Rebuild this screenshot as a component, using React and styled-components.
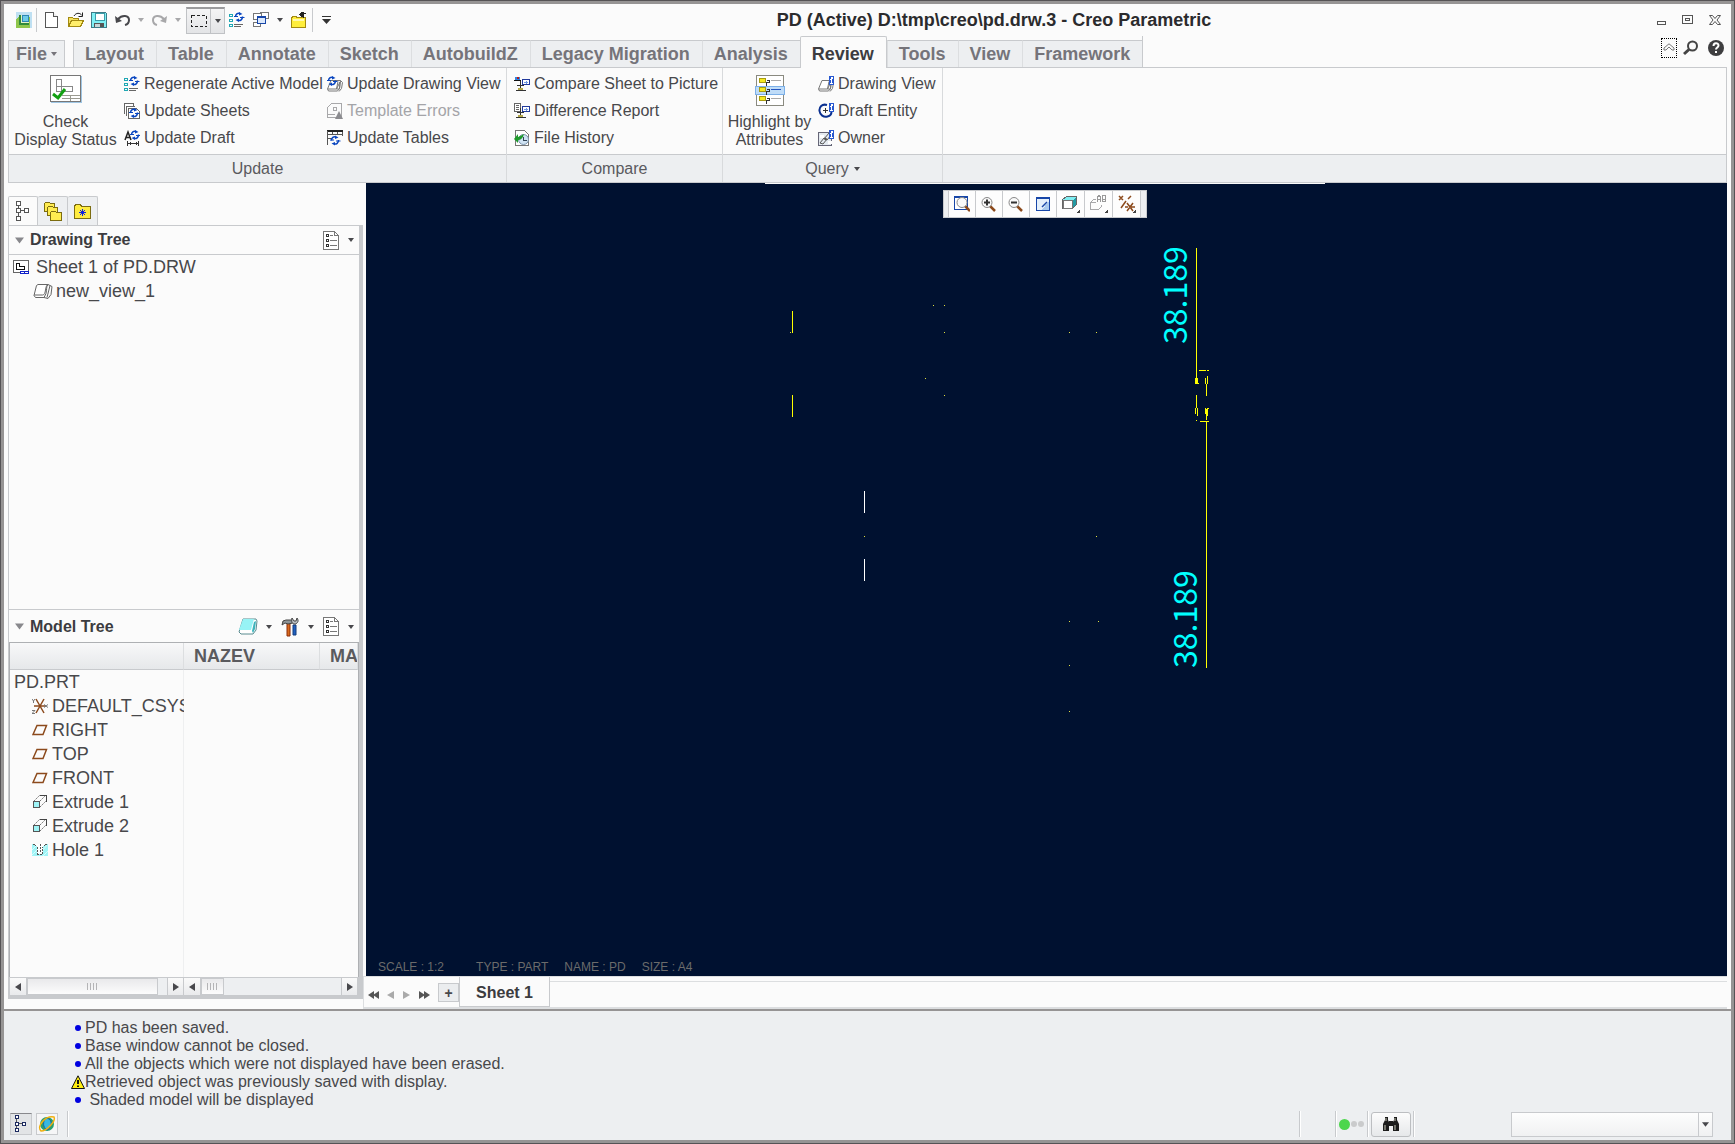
import React from 'react'
import styled, { createGlobalStyle, css } from 'styled-components'

const GlobalStyle = createGlobalStyle`
  * {
    box-sizing: border-box;
  }

  body {
    margin: 0;
    background: #fbfbfb;
    color: #48484b;
    font: 16px/18px "Liberation Sans", Arial, sans-serif;
  }

  button, input, select {
    margin: 0;
    padding: 0;
    border: 0;
    background: none;
    color: inherit;
    font: inherit;
  }

  svg {
    display: block;
    flex: none;
  }
`

const line = '#c8cacd'
const panel = '#edeff1'

/* ---------- window ---------- */

const Window = styled.div`
  display: flex;
  flex-direction: column;
  min-height: 100vh;
  border: 1px solid #555355;
  background: #969494;
  padding: 3px;
`

const Body = styled.div`
  flex: 1;
  display: flex;
  flex-direction: column;
  background: #fbfbfb;
`

const TitleBar = styled.header`
  display: flex;
  align-items: center;
  height: 32px;
  padding-left: 8px;
`

const Title = styled.h1`
  flex: 1;
  margin: 0;
  font-size: 18px;
  line-height: 24px;
  text-align: center;
  color: #2b2b2d;
`

const ToolButton = styled.button`
  display: flex;
  align-items: center;
  justify-content: center;
  width: ${props => props.$width || 24}px;
  height: 24px;
`

const ToolDivider = styled.span`
  width: 1px;
  height: 24px;
  margin-left: ${props => props.$gap || 0}px;
  background: ${line};
`

const SelectMode = styled.div`
  display: flex;
  margin-left: 1px;
  border: 1px solid #c0c2c5;
  border-top: 2px solid #9a9a9c;
  background: linear-gradient(#f4f4f5, #e3e4e6);

  button + button {
    border-left: 1px solid #c0c2c5;
  }
`

const WindowButtons = styled.div`
  display: flex;
  align-items: center;
  gap: 3px;
  padding-right: 4px;
`

/* ---------- ribbon ---------- */

const TabStrip = styled.nav`
  display: flex;
  align-items: flex-end;
  height: 31px;
  padding: 0 4px;
`

const TabList = styled.div`
  display: flex;
  align-items: flex-end;
  margin-left: 8px;
  border-right: 1px solid ${line};
`

const Tab = styled.button`
  height: 27px;
  padding: 0 12px 0 11px;
  border-top: 1px solid ${line};
  border-left: 1px solid ${props => props.$edge ? line : '#dcdee0'};
  background: ${panel};
  color: #75747a;
  font-size: 18px;
  font-weight: bold;
  white-space: nowrap;

  ${props => props.$active && css`
    height: 32px;
    margin-bottom: -1px;
    padding-bottom: 2px;
    padding-top: 4px;
    border: 1px solid ${line};
    border-bottom: 0;
    border-radius: 2px 2px 0 0;
    background: #fbfbfb;
    color: #3c3c40;
    position: relative;
  `}
`

const FileTab = styled(Tab)`
  display: flex;
  align-items: center;
  gap: 4px;
  padding: 0 7px;
  border-right: 1px solid ${line};
`

const StripTools = styled.div`
  display: flex;
  align-items: center;
  align-self: flex-start;
  gap: 2px;
  margin-left: auto;
`

const CollapseButton = styled.button`
  width: 16px;
  height: 20px;
  border: 1px dotted #000;
  display: flex;
  justify-content: center;
  align-items: center;
`

const Ribbon = styled.section`
  display: flex;
  height: 116px;
  margin: 0 4px;
  border: 1px solid ${line};
`

const Group = styled.div`
  display: flex;
  flex-direction: column;
  width: ${props => props.$width ? `${props.$width}px` : 'auto'};
  ${props => !props.$width && 'flex: 1;'}
  border-right: ${props => props.$width ? `1px solid #d8dadc` : '0'};
`

const GroupBody = styled.div`
  flex: 1;
  display: flex;
  padding: 2px 0 0 ${props => props.$inset || 0}px;
`

const GroupLabel = styled.div`
  display: flex;
  align-items: center;
  justify-content: center;
  gap: 5px;
  height: 28px;
  border-top: 1px solid ${line};
  background: ${panel};
  color: #5a5a5e;
`

const BigButton = styled.button`
  display: flex;
  flex-direction: column;
  align-items: center;
  justify-content: space-between;
  width: ${props => props.$width}px;
  padding: 5px 4px 5px 0;
  white-space: nowrap;
`

const Column = styled.div`
  display: flex;
  flex-direction: column;
  width: ${props => props.$width}px;
`

const Command = styled.button`
  display: flex;
  align-items: center;
  gap: 4px;
  height: 27px;
  white-space: nowrap;
  color: ${props => props.disabled ? '#a4a4a8' : 'inherit'};
`

/* ---------- navigator ---------- */

const Main = styled.main`
  flex: 1;
  display: flex;
  padding: 0 4px;
`

const Sidebar = styled.aside`
  display: flex;
  flex-direction: column;
  width: 355px;
  padding: 13px 0 10px;
`

const NavTabs = styled.div`
  display: flex;
  height: 29px;
`

const NavTab = styled.button`
  display: flex;
  align-items: center;
  justify-content: center;
  width: 30px;
  border: 1px solid ${line};
  border-left-width: ${props => props.$active ? 1 : 0}px;
  border-bottom: 0;
  border-radius: 2px 2px 0 0;
  background: ${props => props.$active ? '#fbfbfb' : panel};
`

const NavPanel = styled.div`
  flex: 1;
  display: flex;
  flex-direction: column;
  border: solid ${line};
  border-width: 1px 4px 4px 1px;
`

const TreeSection = styled.section`
  flex: 1 1 ${props => props.$basis || 0}px;
  display: flex;
  flex-direction: column;
  min-height: 0;
`

const TreeHeader = styled.div`
  display: flex;
  align-items: center;
  height: ${props => props.$tall ? 33 : 29}px;
  padding: ${props => props.$tall ? 2 : 0}px 0 0 6px;
  border: solid ${line};
  border-width: ${props => props.$tall ? '1px 0 0' : '0 0 1px'};
`

const TreeTitle = styled.h2`
  flex: 1;
  display: flex;
  align-items: center;
  gap: 6px;
  margin: 0;
  font-size: 16px;
  color: #3c3c40;
`

const SheetTree = styled.ul`
  margin: 0;
  padding: 0;
  list-style: none;
  font-size: 18px;
`

const SheetItem = styled.li`
  display: flex;
  align-items: center;
  gap: ${props => props.$level ? 3 : 7}px;
  height: 24px;
  padding-left: ${props => 4 + props.$level * 20}px;
`

const TableArea = styled.div`
  flex: 1;
  overflow: hidden;
  border: 1px solid #aeb0b3;
  border-bottom: 0;
  background: linear-gradient(to right, transparent 173px, #eeeff0 173px, #eeeff0 174px, transparent 174px);
`

const ModelTable = styled.table`
  width: 100%;
  table-layout: fixed;
  border-collapse: separate;
  border-spacing: 0;
  font-size: 18px;

  th {
    height: 27px;
    padding: 0 0 0 10px;
    border-bottom: 1px solid ${line};
    border-right: 1px solid #dcdee0;
    background: linear-gradient(#f8f8f9, #e6e8ea);
    text-align: left;
    color: #5a5a5e;
    overflow: hidden;
    white-space: nowrap;
  }

  td {
    height: 24px;
    padding: 0;
    overflow: hidden;
  }
`

const Feature = styled.div`
  display: flex;
  align-items: center;
  gap: 4px;
  padding-left: ${props => props.$root ? 4 : 22}px;
  white-space: nowrap;
`

const ScrollRow = styled.div`
  display: flex;
  height: 18px;
  border: 1px solid ${line};
  border-width: 1px 1px 0;
  background: ${panel};
`

const ScrollBar = styled.div`
  display: flex;
  width: ${props => props.$width ? `${props.$width}px` : 'auto'};
  flex: ${props => props.$width ? 'none' : 1};
`

const ScrollArrow = styled.button`
  display: flex;
  align-items: center;
  justify-content: center;
  width: 17px;
  border: solid ${line};
  border-width: 0 1px 0 0;
  background: linear-gradient(#fafafa, #e9eaec);

  &:last-child {
    border-left-width: 1px;
  }
`

const ScrollTrack = styled.div`
  flex: 1;
`

const ScrollThumb = styled.div`
  display: flex;
  align-items: center;
  justify-content: center;
  width: ${props => props.$width}px;
  height: 17px;
  border: 1px solid ${line};
  background: linear-gradient(#e9e9eb, #fcfcfc);
`

/* ---------- drawing area ---------- */

const Workspace = styled.div`
  flex: 1;
  display: flex;
  flex-direction: column;
`

const Canvas = styled.div`
  flex: 1;
  position: relative;
  margin-left: 3px;
  padding-right: 3px;
  background: #001130;
  display: flex;
  flex-direction: column;
  align-items: center;
`

const Drawing = styled.svg`
  position: absolute;
  inset: 0;
  width: 100%;
  height: 100%;
  font-family: "Noto Sans CJK JP", "Liberation Sans", sans-serif;
`

const DockEdge = styled.div`
  width: 560px;
  height: 1px;
  background: #fbfbfb;
`

const ViewTools = styled.div`
  position: relative;
  display: flex;
  height: 28px;
  margin-top: 6px;
  padding: 0 5px 0 4px;
  border: 1px solid ${line};
  background: ${panel};
`

const ViewTool = styled.button`
  display: flex;
  align-items: center;
  justify-content: center;
  width: ${props => props.$menu ? 28 : 27}px;
  border-left: 1px solid ${line};
  background: #fdfdfd;

  &:last-child {
    border-right: 1px solid ${line};
    width: 29px;
  }
`

const SheetInfo = styled.div`
  position: relative;
  display: flex;
  align-self: stretch;
  margin-top: auto;
  padding-left: 12px;
  font-size: 12px;
  line-height: 17px;
  color: #6b6b6b;
`

const InfoItem = styled.span`
  margin-right: ${props => props.$wide ? 32 : 16}px;
`

const SheetBar = styled.div`
  display: flex;
  height: 33px;
  border: 1px solid #dcdee0;
  border-right: 0;
  border-bottom-width: 2px;
`

const SheetNav = styled.div`
  display: flex;
  align-items: center;
  padding: 6px 0 0 4px;
  width: 74px;
`

const SheetNavButton = styled.button`
  display: flex;
  width: 17px;
`

const AddSheet = styled.button`
  width: 21px;
  height: 19px;
  margin-top: 6px;
  border: 1px solid ${line};
  background: #ebedef;
  font-size: 14px;
  font-weight: bold;
  line-height: 16px;
`

const SheetTab = styled.button`
  width: 91px;
  padding-top: 2px;
  border: solid ${line};
  border-width: 0 1px 1px;
  font-weight: bold;
  color: #3c3c40;
`

const SheetRest = styled.div`
  flex: 1;
  margin-top: 4px;
  border-top: 1px solid #dcdee0;
`

/* ---------- messages and status ---------- */

const Footer = styled.footer`
  border-top: 2px solid #969494;
  background: ${panel};
`

const Messages = styled.ul`
  margin: 0;
  padding: 8px 0 0 67px;
  height: 99px;
  list-style: none;
`

const Message = styled.li`
  display: flex;
  align-items: center;
  height: 18px;
  white-space: pre;
`

const Mark = styled.span`
  display: flex;
  justify-content: center;
  width: 14px;
`

const Dot = styled.span`
  width: ${props => props.$size}px;
  height: ${props => props.$size}px;
  border-radius: 50%;
  background: ${props => props.$color};
`

const StatusBar = styled.div`
  display: flex;
  align-items: center;
  height: 30px;
  padding: 0 18px 2px 6px;
`

const StatusButton = styled.button`
  display: flex;
  align-items: center;
  justify-content: center;
  width: 22px;
  height: 22px;
  margin-right: 4px;
  border: 1px solid ${line};
  border-top-color: ${props => props.$pressed ? '#88888c' : line};
  background: ${props => props.$pressed ? '#e2e4e6' : '#f6f6f7'};
`

const StatusDivider = styled.span`
  width: 2px;
  height: 26px;
  margin-left: ${props => props.$gap || 0}px;
  border-left: 1px solid ${line};
  background: #fff;
`

const StatusSpace = styled.span`
  flex: 1;
`

const Lights = styled.div`
  display: flex;
  align-items: center;
  gap: 1px;
  width: 30px;
  padding-left: 2px;
`

const FindButton = styled.button`
  display: flex;
  align-items: center;
  justify-content: center;
  width: 40px;
  height: 25px;
  margin: 0 2px;
  border: 1px solid #bcbec1;
  border-radius: 3px;
  background: linear-gradient(#fcfcfc, #e6e8ea);
`

const Filter = styled.label`
  display: flex;
  align-items: center;
  width: 202px;
  height: 25px;
  margin-left: 96px;
  border: 1px solid ${line};
  background: linear-gradient(#fdfdfd, #f0f1f2);
`

const FilterSelect = styled.select`
  flex: 1;
  height: 100%;
  appearance: none;
`

const FilterArrow = styled.span`
  display: flex;
  align-items: center;
  justify-content: center;
  width: 14px;
  height: 100%;
  border-left: 1px solid ${line};
`

/* ---------- icons ---------- */

const Icon = ({ w = 16, h = 16, children, soft }) => (
  <svg width={w} height={h} viewBox={`0 0 ${w} ${h}`} fill='none' shapeRendering={soft ? 'auto' : 'crispEdges'} aria-hidden='true'>
    {children}
  </svg>
)

const Arrow = ({ color = '#48484c', size = 6 }) => (
  <svg width={size} height={size - 2} viewBox='0 0 6 4' aria-hidden='true'><path d='M0 0h6L3 4z' fill={color} /></svg>
)

const SideArrow = ({ left }) => (
  <Icon w={6} h={8} soft><path d={left ? 'M6 0v8L0 4z' : 'M0 0v8l6-4z'} fill='#48484c' /></Icon>
)

/* two circling arrows, used on top of most of the update icons */
const Cycle = ({ x = 0, y = 0 }) => (
  <g transform={`translate(${x} ${y})`} stroke='#0a46c0' strokeWidth='1.5' shapeRendering='auto'>
    <path d='M1.500 5C1.500 2 3.500 1 6 1.500M8.500 4.500c0 3-2 4.500-4.500 4' />
    <path d='M5 0v3.500L8.500 2zM5 6.500V10L1.500 8z' fill='#0a46c0' stroke='none' />
    <path d='M0 4.500h4M6 5.500h4.500' strokeWidth='1' />
  </g>
)

const AppIcon = () => (
  <Icon>
    <path d='M0 0h16v16H0z' fill='#bfe0f2' /><path d='M2 5h12v11H0V8z' fill='#8fc64c' />
    <path d='M3 3h10v10H3z' fill='#e4f0c8' />
    <path d='M3 3h2v8h8v2H3z' fill='#2f8a3c' />
    <path d='M6.500 3.500h6v6h-6z' fill='#6ccbe8' stroke='#2d86b4' />
  </Icon>
)

const NewIcon = () => (
  <Icon w={13}><path d='M.5.500h8l4 4v11H.5z' fill='#fff' stroke='#555' /><path d='M8.500.500v4h4' fill='#eee' stroke='#555' /></Icon>
)

const OpenIcon = () => (
  <Icon>
    <path d='M.5 14.500v-9h4l1 1h5v3' fill='#f4e05e' stroke='#a38a10' />
    <path d='M.5 14.500l3-6h12l-3 6z' fill='#ffee6a' stroke='#a38a10' />
    <path d='M6 4c2-3.500 6-3.500 8-.5M14.500.500v4h-4' stroke='#222' shapeRendering='auto' />
  </Icon>
)

const SaveIcon = () => (
  <Icon>
    <path d='M.5.500h14l1 1v14H.5z' fill='#7ff0f4' stroke='#3c7c88' />
    <path d='M4 1h9v7H4z' fill='#fff' stroke='#3c9ca8' />
    <path d='M3 11h10v4H3z' fill='#555' /><path d='M4 12h5v3H4z' fill='#c5d6d8' />
  </Icon>
)

const UndoIcon = ({ redo }) => (
  <Icon soft>
    <g transform={redo ? 'translate(16 0) scale(-1 1)' : undefined}>
      <path d='M3 7c4-4.500 11-4 11 1 0 3-2 4.500-4 5' stroke={redo ? '#a8a8aa' : '#48484c'} strokeWidth='2' />
      <path d='M0 4l1 7 6-2z' fill={redo ? '#a8a8aa' : '#48484c'} />
    </g>
  </Icon>
)

const MarqueeIcon = () => <Icon h={12}><path d='M.5.500h15v11H.5z' stroke='#222' strokeDasharray='3 2' /></Icon>

const RegenIcon = () => (
  <Icon>
    <path d='M.5 2.500h3v2h-3zM.5 7.500h3v2h-3zM.5 12.500h3v2h-3z' stroke='#20a8b4' />
    <path d='M5 12.500h9M5 14.500h7' stroke='#666' />
    <Cycle x={5} />
  </Icon>
)

const WindowsIcon = () => (
  <Icon>
    <path d='M.5 1.500h8v6h-8zM6.500.500h9v6h-5M.5 10.500h7v4h-7z' fill='#fff' stroke='#777' />
    <path d='M4.500 4.500h8v7h-8z' fill='#dbe8fb' stroke='#1746a8' /><path d='M4 4h9v2H4z' fill='#1746a8' />
  </Icon>
)

const FolderIcon = () => (
  <Icon>
    <path d='M.5 15.500v-10h1v-1h4v1h9v10z' fill='#ffee3c' stroke='#a38a10' />
    <path d='M2 8h11' stroke='#fff8b0' strokeWidth='2' />
    <path d='M10 3c1-2 3-2 5-2M12 0L8.500 2.500 12 5z' stroke='#222' fill='#222' />
  </Icon>
)

const MoreIcon = () => <Icon w={9} h={8}><path d='M0 .5h9' stroke='#333' /><path d='M0 3h9L4.500 8z' fill='#333' shapeRendering='auto' /></Icon>

const MinimizeIcon = () => <Icon w={12} h={12}><path d='M2.500 7.500h8v3h-8z' stroke='#555' /></Icon>
const RestoreIcon = () => <Icon w={12} h={12}><path d='M.5 1.500h10v8H.5zM3.500 4.500h4v2h-4z' stroke='#555' /></Icon>
const CloseIcon = () => (
  <Icon w={12} h={12} soft><path d='M.5 1.500h3l2.500 3 2.500-3h3L8 6l3.500 4.500h-3L6 7.500l-2.500 3h-3L4 6z' stroke='#555' /></Icon>
)
const CollapseIcon = () => <Icon w={12} h={10} soft><path d='M6 .8L11 5v2L9 7 6 4 3 7 1 7V5z' stroke='#777' /></Icon>
const SearchIcon = () => (
  <Icon soft><circle cx='9.500' cy='6' r='4.500' stroke='#444' strokeWidth='2' /><path d='M6 9.500L1 14' stroke='#444' strokeWidth='3' /></Icon>
)
const HelpIcon = () => (
  <Icon soft>
    <circle cx='8' cy='8' r='8' fill='#3e3e40' />
    <path d='M5.500 6c0-3.500 5-3.500 5-.5C10.500 7.500 8 7.500 8 9.500' stroke='#fff' strokeWidth='2' />
    <path d='M7 11h2v2H7z' fill='#fff' />
  </Icon>
)

const CheckStatusIcon = () => (
  <Icon w={32} h={28}>
    <path d='M1 27h31V1' stroke='#9fc6e4' strokeWidth='2' />
    <path d='M.5.500h30v26H.5z' fill='#fff' stroke='#777' />
    <path d='M6.500 4.500h5v7h11v5h-16zM6.500 11.500h5v5' stroke='#888' />
    <path d='M12 20.500h18M12 23.500h18M20.500 20v6' stroke='#9a9a90' />
    <path d='M3 19l5 4 7-9' stroke='#12a012' strokeWidth='3' shapeRendering='auto' />
  </Icon>
)

const SheetsIcon = () => (
  <Icon>
    <path d='M.5 10.500V.500h9v2M2.500 12.500v-9h8' fill='#fff' stroke='#666' />
    <path d='M4.500 5.500h8l3 3v7h-11z' fill='#fff' stroke='#666' />
    <Cycle x={5} y={5} />
  </Icon>
)

const DraftIcon = () => (
  <Icon>
    <path d='M1 10L4 2l3 8M2 7.500h4' stroke='#222' strokeWidth='1.500' shapeRendering='auto' />
    <path d='M3.500 11v5M14.500 11v5M4 13.500h10M6 12v3M12 12v3' stroke='#333' />
    <Cycle x={6} />
  </Icon>
)

const DrawingViewShape = () => (
  <g stroke='#777' shapeRendering='auto'>
    <path d='M4 4.500h9.500l-1 8-2 2.500h-9L.5 13z' fill='#fff' />
    <path d='M13.500 4.500l2 2-1 6-2.500 3M1 13h8.500L11 5.500' />
    <path d='M9.500 13L13 6l-.5 7z' />
  </g>
)

const UpdateViewIcon = () => <Icon><DrawingViewShape /><Cycle /></Icon>

const TemplateErrorIcon = () => (
  <Icon>
    <path d='M.5 14.500v-10l4-4h10v14z' stroke='#a8a8aa' />
    <circle cx='8' cy='6' r='2' stroke='#a8a8aa' /><path d='M1 11.500h7' stroke='#a8a8aa' />
    <path d='M12 8l4 8H8z' fill='#8c8c90' shapeRendering='auto' />
  </Icon>
)

const UpdateTableIcon = () => (
  <Icon>
    <path d='M0 1h16' stroke='#222' strokeWidth='2' />
    <path d='M.5 1v14M0 4.500h16M0 8.500h5M5.500 2v3M10.500 2v3M15.500 2v4' stroke='#555' />
    <Cycle x={3} y={5.500} />
  </Icon>
)

const CompareIcon = ({ report }) => (
  <Icon>
    {report
      ? <path d='M.5.500h6v8h-6zM2 2.500h3M2 4.500h3M2 6.500h3' fill='#fff' stroke='#666' />
      : <g><path d='M1 1h5v4H1z' fill='#3484e0' /><path d='M3 1h2v2H3z' fill='#b02020' /><path d='M0 4.500h7' stroke='#111' /></g>}
    <path d='M8.500 3.500h7v5h-7z' fill='#fff' stroke='#223a9c' /><path d='M10 6.500h4M12 5v3' stroke='#7098e0' />
    <path d='M3 9.500h7M6.500 5v8M2 14.500h10' stroke='#333' />
    <path d='M4 12h5v2H4z' fill='#b5a848' />
  </Icon>
)

const HistoryIcon = () => (
  <Icon>
    <path d='M1.500.500h9l4 4v11h-13z' fill='#fff' stroke='#777' />
    <circle cx='9.500' cy='9.500' r='5' fill='#cfe2f3' stroke='#7a93ab' shapeRendering='auto' />
    <path d='M9.500 6.500v3.500h3' stroke='#345' />
    <path d='M0 9l4-5v3c3-1 4-2 6-3-1 4-3 6-6 6v3z' fill='#1f9a2c' shapeRendering='auto' />
  </Icon>
)

const HighlightIcon = () => (
  <Icon w={30} h={32}>
    <path d='M1.500.500h27v30h-27z' fill='#fff' stroke='#8a8a80' />
    <path d='M.5 11.500h29v8H.5z' fill='#bfdcf8' stroke='#7cb0e8' />
    {[3, 12, 21].map(y => (
      <g key={y}>
        <path d={`M4.500 ${y + 0.5}h6v4h-6z`} fill='#f6ea20' stroke='#a89c10' />
        <path d={`M12 ${y + 2.5}h2.500v2h-3v3`} stroke='#333' />
        <path d={`M16 ${y + 2.5}h10`} stroke={y === 12 ? '#2456c0' : '#aaa'} />
      </g>
    ))}
  </Icon>
)

const InfoMark = () => (
  <g><path d='M11 0h5v9h-5z' fill='#2858d0' /><path d='M13 1h1v1h-1zM12 3.500h1.500v4M12 7.500h3' stroke='#fff' /></g>
)

const QueryViewIcon = () => <Icon><DrawingViewShape /><InfoMark /></Icon>
const DraftEntityIcon = () => (
  <Icon><path d='M9 2C4 .5 1 4 1.500 8c.5 4 4 6.500 8 5.500 3-.5 4-2 4-5' stroke='#0a3090' strokeWidth='2' shapeRendering='auto' /><path d='M5 7.500h5M7.500 5v5' stroke='#333' /><InfoMark /></Icon>
)
const OwnerIcon = () => (
  <Icon>
    <path d='M.5 2.500h13v13H.5z' fill='#e4eaf0' stroke='#667' /><path d='M2 5h4v3H2zM10 11h4v3h-4z' fill='#fff' />
    <path d='M2 13l4-5 3 1-4 5zM6 9l5-6 3 1-5 6z' stroke='#555' shapeRendering='auto' /><InfoMark />
  </Icon>
)

const TreeIcon = () => (
  <Icon w={14} h={20}>
    <path d='M2.500 5v10M5 9.500h4' stroke='#555' />
    <path d='M.5.500h4v4h-4zM.5 7.500h4v4h-4zM.5 15.500h4v4h-4zM8.500 7.500h4v4h-4z' fill='#fff' stroke='#555' />
  </Icon>
)

const FoldersIcon = () => (
  <Icon w={18} h={19}>
    <path d='M.5 9.500v-8l1-1h4l1 1h4v8z' fill='#ffec50' stroke='#7c6c10' />
    <path d='M3.500 13.500v-8l1-1h4l1 1h4v8z' fill='#ffec50' stroke='#7c6c10' />
    <path d='M6.500 18.500v-8l1-1h4l1 1h5v8z' fill='#ffec50' stroke='#7c6c10' />
  </Icon>
)

const FavoritesIcon = () => (
  <Icon w={17} h={15}>
    <path d='M.5 14.500v-12l1-2h5l1 2h9v12z' fill='#ffec40' stroke='#7c6c10' />
    <path d='M8.500 5v7M5 8.500h7M6 6l5 5M11 6l-5 5' stroke='#1020e0' />
  </Icon>
)

const SettingsIcon = () => (
  <Icon h={19}>
    <path d='M.5.500h11l4 4v14H.5z' fill='#fff' stroke='#777' /><path d='M11.500.500v4h4' stroke='#777' />
    <path d='M3 3.500h2v2H3zM3 8.500h2v2H3zM3 13.500h2v2H3z' stroke='#333' /><path d='M7 4.500h3M7 9.500h7M7 14.500h7' stroke='#777' />
  </Icon>
)

const SheetIcon = () => (
  <Icon h={14}>
    <path d='M.5.500h15v12H.5z' fill='#fff' stroke='#666' />
    <path d='M3.500 3.500h3v3h5v3h-8z' stroke='#111' /><path d='M7.500 11.500h8v2h-8zM11.500 11v3' fill='#fff' stroke='#1020c8' />
  </Icon>
)

const ViewItemIcon = () => (
  <Icon w={20} h={17} soft>
    <path d='M5 1.500h10c-2 2-1 5-2 9l-2 4H2.500L1 12.500 3.500 2.500z' fill='#fff' stroke='#666' />
    <path d='M1 12h8.500c2 0 2.500-2 3-5s1-5 2.500-5.500M15 1.500l4 2-1 8-3 4-4-1M17 2.500l-3 12' stroke='#666' />
  </Icon>
)

const ShowIcon = () => (
  <Icon w={20} h={17} soft>
    <path d='M5 1h13l1 2-1 9-3 4H3l-2-2z' fill='#fff' stroke='#5a8c90' />
    <path d='M5 1h11l-3 11H1z' fill='#97f3f5' /><path d='M16 4l2-1-1 8-2 4-1-2z' fill='#3fb4bc' />
  </Icon>
)

const ToolsIcon = () => (
  <Icon w={18} h={20} soft>
    <path d='M6 6h3v13H6z' fill='#d86a1c' stroke='#8c2c08' /><path d='M1 8l1-4 3-1h6l1 3-5 1-3-1z' fill='#8c9498' stroke='#444' />
    <path d='M12 8h3v10h-3z' fill='#2060c0' stroke='#143c7c' /><path d='M11 1c-1 4 0 5 2 6h2c2-2 3-3 1-6l-1 3h-2z' fill='#b8bcc0' stroke='#444' />
  </Icon>
)

const CsysIcon = () => (
  <Icon><path d='M4 1l8 14M12 1L4 15M2 8h12' stroke='#8c4a1c' strokeWidth='1.500' shapeRendering='auto' /><path d='M0 1l1.500 2L3 1M1.500 3v2M12 6.500l4 3M16 6.500l-4 3M0 12.500h3l-3 3h3' stroke='#777' shapeRendering='auto' /></Icon>
)
const PlaneIcon = () => <Icon h={12} soft><path d='M5 1.500h9.500L11 10.500H1z' stroke='#8c4a1c' strokeWidth='1.500' /></Icon>
const ExtrudeIcon = () => (
  <Icon>
    <path d='M2 7l6-6M8 7l6-6M8 13l6-6' stroke='#777' strokeDasharray='2 1' shapeRendering='auto' />
    <path d='M8 1.500h6.500V8' stroke='#444' /><path d='M1.500 7.500h6v6h-6z' fill='#9ff4f6' stroke='#555' />
  </Icon>
)
const HoleIcon = () => (
  <Icon h={14}>
    <path d='M0 1h16v12H0z' fill='#9ff4f6' />
    <path d='M0 7l5-5M0 12l5-5M11 13l5-5M11 7l4-5' stroke='#d8fbfc' shapeRendering='auto' />
    <path d='M3 1h10l-2 3v7H5V4z' fill='#fff' />
    <path d='M1 1.500h2M13 1.500h2M3 2l2 2M13 2l-2 2M5.500 4v7h5V4M8.500 1v8' stroke='#555' strokeDasharray='2 1' />
  </Icon>
)

const Glass = ({ x = 7, children }) => (
  <g shapeRendering='auto'><path d={`M${x + 3} 10l5 5`} stroke='#8c4a1c' strokeWidth='2.500' /><circle cx={x} cy='6.500' r='5' fill='#fafafa' stroke='#888' />{children}</g>
)
const RefitIcon = () => <Icon><path d='M.5.500h13v13H.5z' fill='#fff' stroke='#1746a8' /><path d='M0 1h14' stroke='#1746a8' strokeWidth='2' /><Glass x={8} /></Icon>
const ZoomInIcon = () => <Icon><Glass x={6}><path d='M3 6.500h6M6 3.500v6' stroke='#333' strokeWidth='2' /></Glass></Icon>
const ZoomOutIcon = () => <Icon><Glass x={6}><path d='M3 6.500h6' stroke='#333' strokeWidth='2' /></Glass></Icon>
const RepaintIcon = () => (
  <Icon w={15}><path d='M.5 1.500h13v13H.5z' fill='#e4f0fb' stroke='#1746a8' /><path d='M0 1.500h14' stroke='#1746a8' strokeWidth='2' /><path d='M6 14l7-9v9z' fill='#a8caee' /><path d='M6 11l5-5' stroke='#1746a8' strokeWidth='1.500' shapeRendering='auto' /></Icon>
)
const DisplayStyleIcon = () => (
  <Icon w={18} h={18}><path d='M.5 4.500l4-3h10v8l-4 4H.5z' fill='#80eef2' stroke='#666' /><path d='M1 5h9v8H1z' fill='#fff' stroke='#777' /><path d='M11 5l3-3v7l-3 4z' fill='#239aa4' /><path d='M18 14v4h-4z' fill='#444' /></Icon>
)
const AnnotationIcon = () => (
  <Icon w={18} h={18}>
    <path d='M6 4.500H3.500l-3 3v7h8l3-3v-2' stroke='#a8a8aa' /><path d='M1 7.500h5' stroke='#a8a8aa' />
    <path d='M7.500 7V2.500l1-2h1l1 2V7M8 4.500h2M12.500.500v6h3V4h-3H15V.500z' stroke='#999' /><path d='M18 14v4h-4z' fill='#444' />
  </Icon>
)
const DatumIcon = () => (
  <Icon w={18} h={18}><path d='M1 1l4 4M5 1L1 5M13 1L10 4M8 6L3 13M9 8l6 8M15 8l-6 8M7 12h3M13 12h4' stroke='#8c4a1c' strokeWidth='1.500' shapeRendering='auto' /><path d='M18 14v4h-4z' fill='#444' /></Icon>
)

const WarningIcon = () => (
  <Icon w={14} h={14} soft><path d='M7 .8L13.500 13.500H.5z' fill='#ffee10' stroke='#111' /><path d='M7 5v4M7 10.500v1.500' stroke='#111' strokeWidth='2' /></Icon>
)
const NavigatorIcon = () => (
  <Icon w={14} h={18}>
    <path d='M2.500 4v10M5 8.500h4' stroke='#555' />
    <path d='M1.500.500h3v3h-3zM1.500 7.500h3v3h-3zM1.500 13.500h3v3h-3zM8.500 7.500h3v3h-3z' fill='#fff' stroke='#1c2a60' />
  </Icon>
)
const BrowserIcon = () => (
  <Icon w={18} h={18} soft><circle cx='9' cy='9' r='7' fill='#28a070' /><path d='M7 4c4-2 7 2 6 6l-3 5C6 14 4 9 7 4z' fill='#38b8e0' stroke='#1a64a4' /><path d='M3 16C-2 11 8 0 16 2c2 4-7 14-13 14z' stroke='#f0b010' strokeWidth='1.500' /></Icon>
)
const BinocularsIcon = () => (
  <Icon w={18} soft>
    <path d='M3 1h3v3l1 2v9H1V8l2-4zM12 1h3v3l2 4v7h-6V6l1-2zM7 5h4v5H7z' fill='#1c1c1c' /><path d='M3 9v5M13 9v5M4 2v3M13 2v3' stroke='#c8c8b8' />
  </Icon>
)

/* ---------- parts ---------- */

const tabs = ['Layout', 'Table', 'Annotate', 'Sketch', 'AutobuildZ', 'Legacy Migration', 'Analysis', 'Review', 'Tools', 'View', 'Framework']

const features = [
  ['DEFAULT_CSYS', CsysIcon],
  ['RIGHT', PlaneIcon],
  ['TOP', PlaneIcon],
  ['FRONT', PlaneIcon],
  ['Extrude 1', ExtrudeIcon],
  ['Extrude 2', ExtrudeIcon],
  ['Hole 1', HoleIcon]
]

const messages = [
  'PD has been saved.',
  'Base window cannot be closed.',
  'All the objects which were not displayed have been erased.',
  'Retrieved object was previously saved with display.',
  ' Shaded model will be displayed'
]

const Cmd = ({ icon, children, disabled }) => (
  <Command disabled={disabled}>{icon}<span>{children}</span></Command>
)

const TopBar = () => (
  <TitleBar>
    <ToolButton aria-label='Application'><AppIcon /></ToolButton>
    <ToolDivider />
    <ToolButton $width={28} aria-label='New'><NewIcon /></ToolButton>
    <ToolButton $width={22} aria-label='Open'><OpenIcon /></ToolButton>
    <ToolButton aria-label='Save'><SaveIcon /></ToolButton>
    <ToolButton aria-label='Undo'><UndoIcon /></ToolButton>
    <ToolButton $width={12} aria-label='Undo list'><Arrow color='#a8a8aa' /></ToolButton>
    <ToolButton aria-label='Redo'><UndoIcon redo /></ToolButton>
    <ToolButton $width={14} aria-label='Redo list'><Arrow color='#a8a8aa' /></ToolButton>
    <SelectMode>
      <ToolButton $width={23} aria-label='Select'><MarqueeIcon /></ToolButton>
      <ToolButton $width={14} aria-label='Select mode'><Arrow /></ToolButton>
    </SelectMode>
    <ToolButton aria-label='Regenerate'><RegenIcon /></ToolButton>
    <ToolButton aria-label='Windows'><WindowsIcon /></ToolButton>
    <ToolButton $width={14} aria-label='Window list'><Arrow /></ToolButton>
    <ToolButton aria-label='Working directory'><FolderIcon /></ToolButton>
    <ToolDivider $gap={1} />
    <ToolButton $width={26} aria-label='Customize toolbar'><MoreIcon /></ToolButton>
    <Title>PD (Active) D:\tmp\creo\pd.drw.3 - Creo Parametric</Title>
    <WindowButtons>
      <ToolButton aria-label='Minimize'><MinimizeIcon /></ToolButton>
      <ToolButton aria-label='Restore'><RestoreIcon /></ToolButton>
      <ToolButton aria-label='Close'><CloseIcon /></ToolButton>
    </WindowButtons>
  </TitleBar>
)

const RibbonArea = () => (
  <>
    <TabStrip>
      <FileTab $edge>File<Arrow color='#75747a' /></FileTab>
      <TabList role='tablist'>
        {tabs.map((name, i) => (
          <Tab key={name} role='tab' $edge={i === 0} $active={name === 'Review'} aria-selected={name === 'Review'}>{name}</Tab>
        ))}
      </TabList>
      <StripTools>
        <CollapseButton aria-label='Minimize the ribbon'><CollapseIcon /></CollapseButton>
        <ToolButton aria-label='Search'><SearchIcon /></ToolButton>
        <ToolButton $width={22} aria-label='Help'><HelpIcon /></ToolButton>
      </StripTools>
    </TabStrip>
    <Ribbon>
      <Group $width={498}>
        <GroupBody $inset={2}>
          <BigButton $width={113}><CheckStatusIcon /><span>Check<br />Display Status</span></BigButton>
          <Column $width={203}>
            <Cmd icon={<RegenIcon />}>Regenerate Active Model</Cmd>
            <Cmd icon={<SheetsIcon />}>Update Sheets</Cmd>
            <Cmd icon={<DraftIcon />}>Update Draft</Cmd>
          </Column>
          <Column $width={176}>
            <Cmd icon={<UpdateViewIcon />}>Update Drawing View</Cmd>
            <Cmd icon={<TemplateErrorIcon />} disabled>Template Errors</Cmd>
            <Cmd icon={<UpdateTableIcon />}>Update Tables</Cmd>
          </Column>
        </GroupBody>
        <GroupLabel>Update</GroupLabel>
      </Group>
      <Group $width={216}>
        <GroupBody $inset={7}>
          <Column $width={205}>
            <Cmd icon={<CompareIcon />}>Compare Sheet to Picture</Cmd>
            <Cmd icon={<CompareIcon report />}>Difference Report</Cmd>
            <Cmd icon={<HistoryIcon />}>File History</Cmd>
          </Column>
        </GroupBody>
        <GroupLabel>Compare</GroupLabel>
      </Group>
      <Group $width={220}>
        <GroupBody $inset={2}>
          <BigButton $width={93}><HighlightIcon /><span>Highlight by<br />Attributes</span></BigButton>
          <Column $width={122}>
            <Cmd icon={<QueryViewIcon />}>Drawing View</Cmd>
            <Cmd icon={<DraftEntityIcon />}>Draft Entity</Cmd>
            <Cmd icon={<OwnerIcon />}>Owner</Cmd>
          </Column>
        </GroupBody>
        <GroupLabel>Query<Arrow /></GroupLabel>
      </Group>
      <Group>
        <GroupBody />
        <GroupLabel />
      </Group>
    </Ribbon>
  </>
)

const Grip = () => <Icon w={12} h={7}><path d='M.5 0v7M3.500 0v7M6.500 0v7M9.500 0v7' stroke='#b4b4b6' /></Icon>

const Scroll = ({ width, thumb, name }) => (
  <ScrollBar $width={width}>
    <ScrollArrow aria-label={`${name} left`}><SideArrow left /></ScrollArrow>
    <ScrollTrack><ScrollThumb $width={thumb}><Grip /></ScrollThumb></ScrollTrack>
    <ScrollArrow aria-label={`${name} right`}><SideArrow /></ScrollArrow>
  </ScrollBar>
)

const Navigator = () => (
  <Sidebar>
    <NavTabs>
      <NavTab $active aria-label='Model tree'><TreeIcon /></NavTab>
      <NavTab aria-label='Folder browser'><FoldersIcon /></NavTab>
      <NavTab aria-label='Favorites'><FavoritesIcon /></NavTab>
    </NavTabs>
    <NavPanel>
      <TreeSection>
        <TreeHeader>
          <TreeTitle><Arrow color='#88888c' size={9} />Drawing Tree</TreeTitle>
          <ToolButton aria-label='Drawing tree settings'><SettingsIcon /></ToolButton>
          <ToolButton $width={16} aria-label='Settings list'><Arrow /></ToolButton>
        </TreeHeader>
        <SheetTree>
          <SheetItem $level={0}><SheetIcon />Sheet 1 of PD.DRW</SheetItem>
          <SheetItem $level={1}><ViewItemIcon />new_view_1</SheetItem>
        </SheetTree>
      </TreeSection>
      <TreeSection $basis={4}>
        <TreeHeader $tall>
          <TreeTitle><Arrow color='#88888c' size={9} />Model Tree</TreeTitle>
          <ToolButton $width={26} aria-label='Show'><ShowIcon /></ToolButton>
          <ToolButton $width={16} aria-label='Show list'><Arrow /></ToolButton>
          <ToolButton $width={26} aria-label='Tree tools'><ToolsIcon /></ToolButton>
          <ToolButton $width={16} aria-label='Tools list'><Arrow /></ToolButton>
          <ToolButton aria-label='Model tree settings'><SettingsIcon /></ToolButton>
          <ToolButton $width={16} aria-label='Settings list'><Arrow /></ToolButton>
        </TreeHeader>
        <TableArea>
          <ModelTable>
            <colgroup><col width='174' /><col width='136' /><col /></colgroup>
            <thead><tr><th /><th>NAZEV</th><th>MA</th></tr></thead>
            <tbody>
              <tr><td><Feature $root>PD.PRT</Feature></td><td /><td /></tr>
              {features.map(([name, FeatureIcon]) => (
                <tr key={name}><td><Feature><FeatureIcon />{name}</Feature></td><td /><td /></tr>
              ))}
            </tbody>
          </ModelTable>
        </TableArea>
        <ScrollRow>
          <Scroll width={174} thumb={131} name='Tree' />
          <Scroll thumb={23} name='Columns' />
        </ScrollRow>
      </TreeSection>
    </NavPanel>
  </Sidebar>
)

const dots = [
  [424, 149], [567, 122], [578, 122], [578, 149], [703, 149], [730, 149], [559, 195], [578, 212],
  [498, 353], [730, 353], [703, 438], [732, 438], [703, 482], [703, 528]
]

const DrawingArea = () => (
  <Canvas>
    <Drawing aria-label='Drawing sheet'>
      <g shapeRendering='crispEdges' strokeWidth='1'>
        <path d='M426.500 128v22M426.500 212v22' stroke='#ffff00' />
        <path d='M498.500 308v22M498.500 376v22' stroke='#ffffff' />
        {dots.map(([x, y]) => <rect key={`${x}-${y}`} x={x} y={y} width='1' height='1' fill='#e0e040' />)}
        <path d='M830.500 65v136M840.500 238v247M833 187.500h7M841 187.500h2M840.500 201v12M830.500 212v13M834 238.500h9M830.500 237v1M840.500 226v11' stroke='#ffff00' />
        <path d='M829.500 195v6M831.500 195v6M832.500 200v1M839.500 195v6M841.500 193v8M829.500 225v6M831.500 225v8M839.500 225v6M841.500 225v8M842.500 225v1' stroke='#ffff00' />
      </g>
      <g fill='#00ffff' fontSize='32'>
        <text transform='translate(821 161) rotate(-90)'>38.189</text>
        <text transform='translate(831 485) rotate(-90)'>38.189</text>
      </g>
    </Drawing>
    <DockEdge />
    <ViewTools>
      <ViewTool aria-label='Refit'><RefitIcon /></ViewTool>
      <ViewTool aria-label='Zoom in'><ZoomInIcon /></ViewTool>
      <ViewTool aria-label='Zoom out'><ZoomOutIcon /></ViewTool>
      <ViewTool aria-label='Repaint'><RepaintIcon /></ViewTool>
      <ViewTool $menu aria-label='Display style'><DisplayStyleIcon /></ViewTool>
      <ViewTool $menu aria-label='Annotation display'><AnnotationIcon /></ViewTool>
      <ViewTool $menu aria-label='Datum display'><DatumIcon /></ViewTool>
    </ViewTools>
    <SheetInfo>
      <InfoItem $wide>SCALE : 1:2</InfoItem>
      <InfoItem>TYPE : PART</InfoItem>
      <InfoItem>NAME : PD</InfoItem>
      <InfoItem>SIZE : A4</InfoItem>
    </SheetInfo>
  </Canvas>
)

const Sheets = () => (
  <SheetBar>
    <SheetNav>
      <SheetNavButton aria-label='First sheet'><Icon w={11} h={8} soft><path d='M6 0v8L0 4zM11 0v8L5 4z' fill='#555' /></Icon></SheetNavButton>
      <SheetNavButton aria-label='Previous sheet'><Icon w={11} h={8} soft><path d='M9 0v8L2 4z' fill='#aaa' /></Icon></SheetNavButton>
      <SheetNavButton aria-label='Next sheet'><Icon w={11} h={8} soft><path d='M1 0v8l7-4z' fill='#aaa' /></Icon></SheetNavButton>
      <SheetNavButton aria-label='Last sheet'><Icon w={11} h={8} soft><path d='M0 0v8l6-4zM5 0v8l6-4z' fill='#555' /></Icon></SheetNavButton>
    </SheetNav>
    <AddSheet aria-label='Add sheet'>+</AddSheet>
    <SheetTab>Sheet 1</SheetTab>
    <SheetRest />
  </SheetBar>
)

const Status = () => (
  <Footer>
    <Messages>
      {messages.map((text, i) => (
        <Message key={text}>
          <Mark>{i === 3 ? <WarningIcon /> : <Dot $size={6} $color='#0000e0' />}</Mark>
          {text}
        </Message>
      ))}
    </Messages>
    <StatusBar>
      <StatusButton $pressed aria-label='Navigator'><NavigatorIcon /></StatusButton>
      <StatusButton aria-label='Browser'><BrowserIcon /></StatusButton>
      <StatusDivider $gap={5} />
      <StatusSpace />
      <StatusDivider />
      <StatusDivider $gap={34} />
      <Lights>
        <Dot $size={11} $color='#4cd64c' />
        <Dot $size={6} $color='#cacbcc' />
        <Dot $size={6} $color='#cacbcc' />
      </Lights>
      <StatusDivider />
      <FindButton aria-label='Find'><BinocularsIcon /></FindButton>
      <StatusDivider />
      <Filter>
        <FilterSelect aria-label='Selection filter' />
        <FilterArrow><Arrow size={7} /></FilterArrow>
      </Filter>
    </StatusBar>
  </Footer>
)

const App = () => (
  <>
    <GlobalStyle />
    <Window>
      <Body>
        <TopBar />
        <RibbonArea />
        <Main>
          <Navigator />
          <Workspace>
            <DrawingArea />
            <Sheets />
          </Workspace>
        </Main>
        <Status />
      </Body>
    </Window>
  </>
)

export default App
